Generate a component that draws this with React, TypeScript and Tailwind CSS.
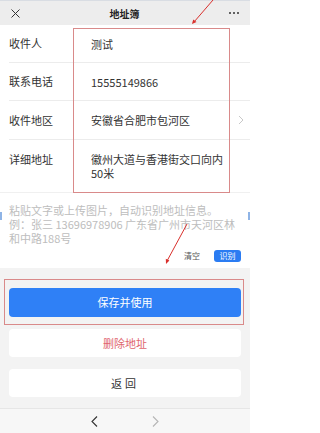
import React from "react";

const font = { fontFamily: '"Noto Sans CJK SC", "Noto Sans", sans-serif' };

function Row({ label, children, h, chevron }: { label: string; children: React.ReactNode; h: string; chevron?: boolean }) {
  return (
    <div className={`flex ml-[9px] border-b border-[#ececec] ${h}`}>
      <div className="w-[82px] shrink-0 flex items-center text-[11px] text-[#333]">{label}</div>
      <div className="flex-1 flex items-center text-[11px] text-[#333] leading-[14px]">{children}</div>
      {chevron && (
        <div className="w-[18px] flex items-center justify-center">
          <svg width="6" height="10" viewBox="0 0 6 10"><path d="M1 1l4 4-4 4" fill="none" stroke="#c8c8c8" strokeWidth="1" /></svg>
        </div>
      )}
    </div>
  );
}

export default function App() {
  return (
    <div className="relative w-[250px] h-[433px] overflow-hidden bg-[#f3f3f3] flex flex-col" style={font}>
      {/* header */}
      <div className="h-[25px] bg-[#ededed] flex items-center justify-between px-[11px] border-t border-[#d9dde3]">
        <svg width="9" height="9" viewBox="0 0 9 9"><path d="M0.5 0.5l8 8M8.5 0.5l-8 8" stroke="#333" strokeWidth="1" /></svg>
        <div className="text-[10px] font-bold text-[#222]">地址簿</div>
        <div className="flex gap-[2px] items-center w-[10px]">
          <span className="w-[2px] h-[2px] rounded-full bg-[#333]" />
          <span className="w-[2px] h-[2px] rounded-full bg-[#333]" />
          <span className="w-[2px] h-[2px] rounded-full bg-[#333]" />
        </div>
      </div>

      {/* form */}
      <div className="bg-white">
        <Row label="收件人" h="h-[38px]">测试</Row>
        <Row label="联系电话" h="h-[38px]">15555149866</Row>
        <Row label="收件地区" h="h-[39px]" chevron>安徽省合肥市包河区</Row>
        <div className="flex ml-[9px] pt-[12px] pb-[12px] h-[52px]">
          <div className="w-[82px] shrink-0 text-[11px] text-[#333] leading-[14px]">详细地址</div>
          <div className="flex-1 text-[11px] text-[#333] leading-[14px] pr-[24px]">徽州大道与香港街交口向内<br />50米</div>
        </div>
      </div>

      {/* paste area */}
      <div className="bg-white h-[76px] px-[9px] pt-[10px] border-t border-[#f0f0f0]">
        <div className="text-[11px] leading-[14px] text-[#bdbdbd]">
          <div className="whitespace-nowrap">粘贴文字或上传图片，自动识别地址信息。</div>
          <div className="whitespace-nowrap">例：张三 13696978906 广东省广州市天河区林</div>
          <div className="whitespace-nowrap">和中路188号</div>
        </div>
        <div className="flex justify-end items-center mt-[5px] gap-[14px] pr-0">
          <span className="text-[8px] text-[#555]">清空</span>
          <span className="h-[12px] w-[27px] rounded-[3px] bg-[#2b7cf2] text-white text-[8px] flex items-center justify-center">识别</span>
        </div>
      </div>

      {/* buttons */}
      <div className="flex flex-col px-[9px] pt-[20px] gap-[12px]">
        <div className="h-[29px] rounded-[4px] bg-[#2f80f6] text-white text-[11px] flex items-center justify-center">保存并使用</div>
        <div className="h-[28px] rounded-[4px] bg-white text-[#e0656c] text-[11px] flex items-center justify-center">删除地址</div>
        <div className="h-[28px] rounded-[4px] bg-white text-[#333] text-[11px] tracking-[3px] flex items-center justify-center">返回</div>
      </div>

      {/* bottom nav */}
      <div className="mt-auto h-[25px] bg-[#f7f7f7] border-t border-[#e6e6e6] flex items-center justify-center gap-[54px]">
        <svg width="7" height="11" viewBox="0 0 7 11"><path d="M6 0.5L1 5.5l5 5" fill="none" stroke="#333" strokeWidth="1.1" /></svg>
        <svg width="7" height="11" viewBox="0 0 7 11"><path d="M1 0.5l5 5-5 5" fill="none" stroke="#b5b5b5" strokeWidth="1.1" /></svg>
      </div>

      {/* side marks */}
      <div className="absolute left-0 top-[212px] w-[2px] h-[8px] bg-[#8fb4e6]" />
      <div className="absolute right-0 top-[212px] w-[2px] h-[8px] bg-[#8fb4e6]" />

      {/* annotation boxes */}
      <div className="absolute left-[73px] top-[28px] w-[157px] h-[165px] border border-[#d98a8a]" />
      <div className="absolute left-[4px] top-[279px] w-[240px] h-[46px] border border-[#d98a8a]" />

      {/* annotation arrows */}
      <svg className="absolute left-0 top-0" width="250" height="433" viewBox="0 0 250 433">
        <line x1="213" y1="0" x2="194" y2="22" stroke="#d9302c" strokeWidth="1" />
        <path d="M192 24 L193.2 19.5 L196.5 22 Z" fill="#d9302c" />
        <line x1="187" y1="224" x2="167" y2="261" stroke="#d9302c" strokeWidth="1" />
        <path d="M166 264 L165.8 258.8 L169.4 260.6 Z" fill="#d9302c" />
      </svg>
    </div>
  );
}
